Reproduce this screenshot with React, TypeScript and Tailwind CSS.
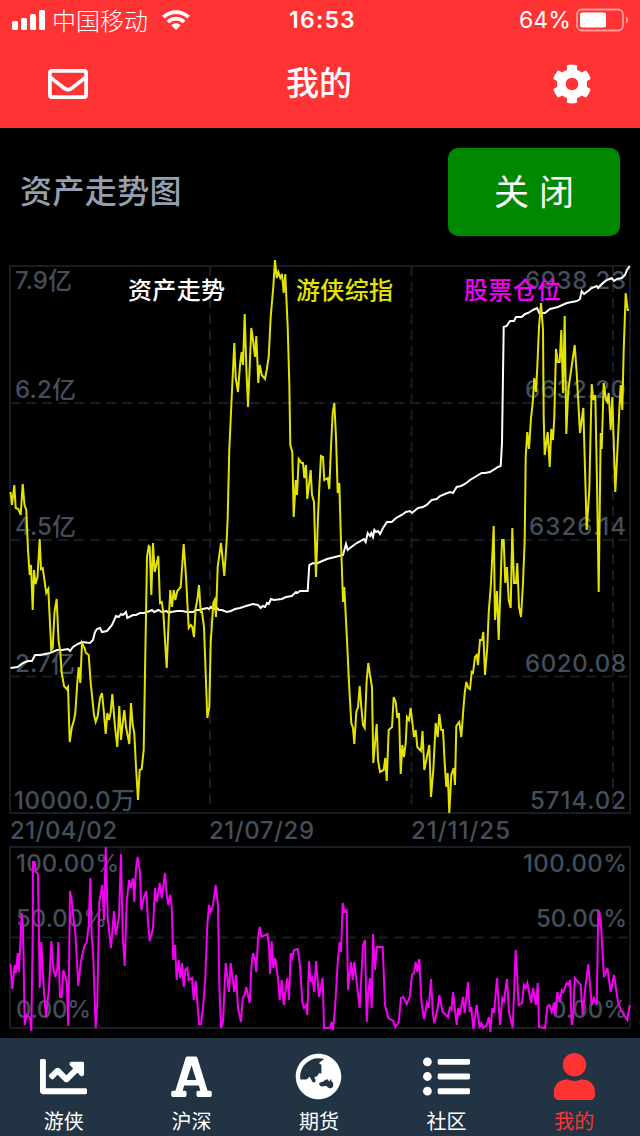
import { clsx } from 'clsx'
import { FaChartLine, FaCog, FaGlobeAsia, FaListUl, FaRegEnvelope, FaUser } from 'react-icons/fa'

const assetLine =
  '10.5,668 17.5,667 23,663 28,661 32,661 35,655 40,655 50,653 57,650 62,650 68,649 70,651 73,647 78,644 82,642 90,643 93,640 95,632 97,629 100,628 102,632 107,631 112,625 116,616 118.7,617 121,614 123,615 126,612 127.3,618 133,615 136,615 140,613 144,613 147,612 150,611 152,610 154,612 158.5,610 161.7,612 166.7,611 168.7,613 171,612 177,611 182,611 187,612 193,612 196,610 200,610 203,609 207,608 209,609 211,607 213,609 217,608 219,610 222,610 226.7,612 231,611 235,609 240,608 246,606 253,604 258,605 260.7,608 262.7,606 265,607 267,603 268.7,604 271,599 274,600 281.7,599 286,597 291.7,596 296,592 297.3,593 300,591 307.7,591 309.3,565 313,563 316,564 320,562 327,559 335,557 343,555 346,544 347.7,550 350,548 356.7,543 364,539 365.7,542 367.7,533 370,536 371.3,533 373,537 374.3,530 376,532 378,531 380,534 383,528 387,522 391.7,522 396,518 401.7,515 406,512 410,511 412,513 418,508 423,507 426.7,505 431.7,500 436.7,499 440,496 445,494 450,492 453,493 456.7,487 461,486 465,484 470,480 475,477 481.7,473 485,473 490,472 498,467 500.7,466 502,443 503.7,327 506.7,326 510,321 514,321 516,317 521.7,317 525,314 528,313 533,310 537,308 539.3,313 545,313 550,309 558,307 566.7,303 572,302 577,301 580,299 581.7,291 584,294 588,291 591.7,288 596.7,286 598,288 603,283 607,280 611.7,278 614,281 617,279 621.7,278 625,275 627,270 629.7,266'

const indexLine =
  '10.5,492 12,505 14.3,485 15.7,508 18.3,509 20.7,515 22.7,484 24.5,505 26.3,510 28,550 29.7,575 31,565 32.7,610 34,570 35.5,584 37.5,577 39.7,539 41,569 42.7,568 46.3,593 48.3,589 51.3,650 52.7,648 54.5,612 55.3,607 56.7,599 58.5,640 60.3,652 61.7,673 64,686 66.7,689 68,687 69.7,742 71.7,728 74,720 75.3,713 77.3,683 78.7,667 80.3,683 82,643 84.5,648 86,653 88.7,655 90.7,683 92.7,702 94,715 95.7,722 97.7,716 100,698 102,693 103.7,710 105.7,734 107.3,713 109,720 110.7,712 112.3,694 115,727 117.3,747 119.3,706 121,740 122.7,723 124.3,710 126,727 129.3,744 131,703 132.7,725 134.3,733 136,767 138,800 139.7,770 141.7,769 143.7,750 145,673 147,557 148.7,546 149.7,547 151.3,595 153,543 154.7,572 156.3,565 158.3,556 160,603 161.7,602 163.3,612 166.7,668 168.7,620 170.3,590 172,607 173.7,590 175.3,600 177.3,591 180.7,587 183.7,544 186,577 188.7,628 190.7,625 192.3,627 194,637 195.7,608 197.3,600 199,585 200.7,612 202,612 204,627 207.3,718 209.3,707 210.7,643 213.3,603 214.7,600 216,617 217.7,567 221,543 224.3,576 226.7,540 227.7,517 229.3,450 231.7,397 234.3,343 235.7,378 238,392 240,365 241.7,352 243,365 244.7,314 246.3,367 248,407 249.7,367 251.3,328 253.3,342 255,357 256.3,336 258.3,383 259.7,365 261.7,375 265,379 266.7,370 268.7,357 270.7,317 273.3,287 275,260 276.7,278 278.3,272 280.3,278 282,274 283.7,293 285.3,274 287.7,327 289.3,383 290.3,445 292.3,452 293.7,517 295.7,480 297,495 298.7,459 301.7,463 303,463 304.3,478 306,465 307.3,499 310.7,470 312,495 314,502 316,577 318,517 319.3,488 321,456 323,457 324.3,480 327.7,478 329.3,489 331,447 332.7,413 334.3,403 336,437 337.7,493 339.3,483 341,543 343,602 344.3,587 347,640 349,683 351.3,723 353,728 354.3,744 356.3,712 358,707 359.7,686 361.3,707 363,725 364.7,728 366.7,680 368.3,663 370,675 372,687 373.3,763 376.7,724 378,760 380,772 383.7,770 385.3,758 386.7,781 388.7,730 392,727 393.7,697 395.7,702 397.3,718 399,713 400.7,774 402.3,745 404,757 405.7,743 407,717 409,720 410.7,708 414,737 415.7,730 417.3,747 421,751 422.5,731 424.3,770 426.7,758 429.3,745 431,797 433.3,770 435.7,723 437.7,737 439.3,714 441.3,730 443,730 444.7,763 446.3,787 447.7,773 449.3,813 451.3,775 453.7,768 455,785 456.3,726 459.3,722 461.3,737 463.3,710 464.7,693 466.3,682 468.3,688 470,689 471.7,672 473,673 475,657 476.7,655 478,665 480,640 482,640 483.3,632 485,675 487.3,647 488.7,613 491,583 493.7,526 495,620 497,591 498.7,640 500.7,580 502,540 503.7,540 505.3,583 507,567 508.7,600 510.7,608 512.3,528 514,583 516,583 517.3,563 519,607 521,617 523,583 524.7,540 525.7,457 527.3,432 529,449 531,418 532.7,403 534.3,378 536,392 537.3,367 539,327 541,303 543,330 543.7,417 544.7,455 547.7,432 549.7,467 551.3,429 553,440 554.3,417 556,349 557.7,362 559.7,362 561.3,330 563,393 564.7,316 566.3,434 568.3,390 574.7,345 576.7,373 580,433 583.3,408 586.7,530 589.3,490 591.7,384 593.3,400 595.3,395 597,483 598.7,592 600.7,433 601.7,449 603.7,383 606,400 607.3,402 608.7,393 610.7,430 612.3,397 615.3,492 617.3,453 619.3,410 620.7,385 622.3,410 623.7,350 625.7,293 627.7,310 629,310'

const positionLine =
  '10.5,964 12.3,989 14.7,965 16,973 17.7,953 19,972 21.7,913 23,927 24.7,1025 26.7,1015 30,1018 31.3,1031 32.7,935 33,862 34.7,862 35.7,872 38,874 39.7,988 41.3,942 43.7,988 46,1017 49,988 51.3,941 53.3,968 55.3,977 57.3,968 58.3,942 60,997 61.7,997 63.3,970 66.7,982 68.3,1026 70,891 71.7,900 73.3,917 75.3,932 78.3,986 80.7,963 84,947 86.7,942 88.7,925 90.3,878 91.7,935 93.3,958 95.7,1028 97.3,1002 99.3,902 102.3,885 104,920 105.7,847 107.7,918 111,948 114,911 115.7,935 119,917 121,854 122.7,935 124.7,966 126.7,902 129,880 130.7,888 133,878 134.3,902 136,868 137.7,857 140,872 141.3,910 143.7,898 146.3,891 148,922 149.7,941 153,928 155,888 156.7,902 159.7,883 161.7,898 165,873 166.7,895 168.3,905 170,895 171.7,907 173.3,960 175,945 176.7,980 178.7,960 180.3,978 182,963 183.7,987 185.3,970 187.3,968 188.7,980 192,978 193.7,1000 195.7,981 197.3,1002 199,1024 201,1024 203,1008 205.3,978 207.3,925 209,905 210.7,912 213,905 215.7,885 218,905 219.3,985 221,1028 223,1022 225.7,963 229,992 230.7,963 234.3,992 236,975 238,1008 241,1022 242.7,998 244.7,995 246.3,987 249.7,1003 251.3,968 253,953 255,960 256.3,972 258,938 259.7,927 261.3,937 267.3,934 269,945 270,974 271.7,941 273.3,968 275,958 278,978 279.7,1000 281.7,980 283.7,1005 287.3,978 289,1000 290.7,953 292.3,958 294,950 297.7,949 300,965 302.3,1002 304,1008 306,1005 307.3,1015 309,961 310.7,982 312.3,978 314.3,992 316,961 319,997 322.7,978 324,1028 330,1028 331.7,1022 333,1030 335,1008 337.7,963 339.7,942 341,952 342.7,903 344.3,912 346.7,910 348,990 351,962 352.7,980 354.3,962 359.7,1008 363,945 365,940 366.7,1022 368.3,992 370,978 371.7,1008 373,934 375,970 376.7,947 382.7,947 385,1005 388.3,1018 393.3,1021 395.3,1027 398.7,1022 401,998 403.3,997 406.7,1004 409.7,997 412,975 414,973 415.7,962 417.3,972 419.3,959 421.5,1003 424,1019 427,1003 428.7,1008 431,979 432.7,1012 434.3,1023 437.7,1008 439.3,995 442.7,1012 448,1017 449.7,1008 451.3,1010 453,992 456.7,1025 458,1008 459.7,1015 463,997 464.7,1013 468,982 469.7,1012 471.3,1007 473.3,1029 476.7,1005 479.7,1028 481.3,1023 483.3,1028 486.7,1025 489,1017 490.3,1032 492.3,1008 494,1013 497,978 500,1025 502.3,998 504,1001 507,979 509,1012 512.7,1028 515.7,950 518.7,1005 522,1003 524,985 525.7,988 527.3,983 531.3,1003 533,988 536,1005 537.7,983 539,1027 545,1028 547.3,1007 549.3,1005 551.7,1012 554,1003 555.7,1015 557.3,992 560,1002 561.7,990 563.3,992 566.7,983 568.7,985 570,980 571.7,1025 573.3,1015 574.7,978 580.7,985 582.7,1015 585.3,988 588.3,964 591.7,1005 594,998 596.7,1005 598.3,910 601,925 604,977 607.3,968 610.7,992 614,975 618,1002 621,1010 627.3,1020 629.7,1005'

const axisLabels = [
  { text: '7.9亿', x: 15, y: 289, width: 57 },
  { text: '6.2亿', x: 15, y: 398, width: 61 },
  { text: '4.5亿', x: 15, y: 535, width: 61 },
  { text: '2.7亿', x: 15, y: 672, width: 60 },
  { text: '10000.0万', x: 14, y: 809, width: 121 },
  { text: '21/04/02', x: 10, y: 839, width: 107 },
  { text: '21/07/29', x: 209, y: 839, width: 105 },
  { text: '21/11/25', x: 411, y: 839, width: 99 },
  { text: '100.00%', x: 16, y: 872, width: 103 },
  { text: '50.00%', x: 16, y: 927, width: 91 },
  { text: '0.00%', x: 16, y: 1018, width: 75 },
  { text: '6938.23', x: 525, y: 289, width: 101 },
  { text: '6632.20', x: 525, y: 398, width: 101 },
  { text: '6326.14', x: 529, y: 535, width: 97 },
  { text: '6020.08', x: 525, y: 672, width: 101 },
  { text: '5714.02', x: 530, y: 809, width: 96 },
  { text: '100.00%', x: 523, y: 872, width: 104 },
  { text: '50.00%', x: 536, y: 927, width: 91 },
  { text: '0.00%', x: 551, y: 1018, width: 76 },
]

const legend = [
  { text: '资产走势', x: 128, color: '#ffffff' },
  { text: '游侠综指', x: 296, color: '#e3e300' },
  { text: '股票仓位', x: 464, color: '#f400f4' },
]

const tabs = [
  { label: '游侠', icon: FaChartLine },
  { label: '沪深', icon: SlabAIcon },
  { label: '期货', icon: FaGlobeAsia },
  { label: '社区', icon: FaListUl },
  { label: '我的', icon: FaUser, active: true },
]

// slab serif capital, the icon package only has the sans one
function SlabAIcon({ className }: { className?: string }) {
  return (
    <svg className={className} viewBox="0 0 48 48" fill="currentColor" fillRule="evenodd">
      <path d="M19.5 3.5h9a1.5 1.5 0 0 1 1.4 1L40.4 38.5H43a1.7 1.7 0 0 1 1.7 1.7v3A1.7 1.7 0 0 1 43 44.900H30.800a1.700 1.700 0 0 1-1.700-1.700v-3a1.700 1.700 0 0 1 1.700-1.700h2.200l-1.500-5.200h-15L15 38.500h2.200a1.700 1.700 0 0 1 1.700 1.700v3a1.700 1.700 0 0 1-1.700 1.700H5a1.700 1.700 0 0 1-1.700-1.700v-3A1.700 1.700 0 0 1 5 38.500h2.600L18.100 4.500a1.500 1.500 0 0 1 1.400-1zM24 12.500l-4.800 15h9.600z" />
    </svg>
  )
}

function StatusBar() {
  return (
    <div className="flex h-10 items-center justify-between pl-3 pr-[11px]">
      <div className="flex w-[240px] items-center">
        <svg className="h-5 w-[33px]" viewBox="0 0 33 20" fill="currentColor">
          <rect x="0" y="11" width="6" height="9" rx="1.5" />
          <rect x="9" y="8" width="6" height="12" rx="1.5" />
          <rect x="18" y="4" width="6" height="16" rx="1.5" />
          <rect x="27" y="0" width="6" height="20" rx="1.5" />
        </svg>
        <span className="ml-[7px] pt-[3px] text-[24px] leading-10 font-light">中国移动</span>
        <svg className="ml-[14px] h-5 w-7" viewBox="0 0 28 20" fill="none" stroke="currentColor" strokeWidth="3.8">
          <path d="M1.4 7.2a18.2 18.2 0 0 1 25.2 0" />
          <path d="M5.9 12a11.6 11.6 0 0 1 16.2 0" />
          <path d="M14 20l-4.7-4.8a6.8 6.8 0 0 1 9.4 0z" fill="currentColor" stroke="none" />
        </svg>
      </div>
      <span className="ml-1 pt-px text-[23px] font-semibold tracking-[1.2px]">16:53</span>
      <div className="flex w-[240px] items-center justify-end">
        <span className="pt-px text-[23px] tracking-[0.1px]">64%</span>
        <svg className="ml-[5px] h-6 w-[53px]" viewBox="0 0 53 24">
          <rect x="1" y="1.5" width="46" height="21" rx="5" fill="none" stroke="#ff9b9b" strokeWidth="1.8" />
          <rect x="4" y="4.5" width="26" height="15" rx="2" fill="#fff" />
          <path d="M50 8.5c3 1 3 6 0 7z" fill="#ff9b9b" />
        </svg>
      </div>
    </div>
  )
}

function Header() {
  return (
    <header className="h-32 bg-[#ff3333] text-white">
      <StatusBar />
      <div className="flex h-[88px] items-center justify-between px-12">
        <FaRegEnvelope className="size-10" />
        <h1 className="mr-0.5 text-[33px] font-medium">我的</h1>
        <FaCog className="size-10" />
      </div>
    </header>
  )
}

function Chart() {
  return (
    <svg className="block h-[782px] w-full" viewBox="0 256 640 782" fill="none">
      <g stroke="#191c24" strokeWidth="2">
        <rect x="10" y="266" width="620" height="547" />
        <rect x="10" y="847" width="620" height="181" />
      </g>
      <g stroke="#1a1c20" strokeWidth="2" strokeDasharray="10 6">
        {[403, 540, 676.5, 937.5].map((y) => (
          <path key={y} d={`M10 ${y}H630`} />
        ))}
        {[210, 411.5, 613].map((x) => (
          <path key={x} d={`M${x} 266V804`} />
        ))}
      </g>
      <g fill="#434f5d" fontSize="24" fontWeight="500">
        {axisLabels.map(({ text, x, y, width }) => (
          <text key={`${x}-${y}`} x={x} y={y} textLength={width}>
            {text}
          </text>
        ))}
      </g>
      <g strokeWidth="2">
        <polyline points={assetLine} stroke="#ffffff" />
        <polyline points={indexLine} stroke="#e3e300" />
        <polyline points={positionLine} stroke="#f400f4" />
      </g>
      <g fontSize="24" fontWeight="500">
        {legend.map(({ text, x, color }) => (
          <text key={text} x={x} y="299" fill={color} textLength="97">
            {text}
          </text>
        ))}
      </g>
    </svg>
  )
}

function TabBar() {
  return (
    <nav className="grid h-[98px] grid-cols-5 bg-[#223344] pr-[2px] text-white">
      {tabs.map(({ label, icon: Icon, active }) => (
        <div key={label} className={clsx('flex flex-col items-center pt-[15px]', active && 'text-[#ff3333]')}>
          <Icon className="size-[47px]" />
          <span className="mt-2 text-[20px] leading-7">{label}</span>
        </div>
      ))}
    </nav>
  )
}

export default function App() {
  return (
    <div className="flex h-[1136px] w-[640px] flex-col overflow-hidden bg-black font-['Inter','Noto_Sans_CJK_SC',sans-serif]">
      <Header />
      <div className="flex h-32 items-center justify-between px-5">
        <h2 className="text-[32px] font-medium tracking-[0.4px] text-[#94a0b2]">资产走势图</h2>
        <button className="h-[88px] w-[172px] rounded-[10px] bg-[#008800] text-[35px] text-white">关 闭</button>
      </div>
      <Chart />
      <TabBar />
    </div>
  )
}
